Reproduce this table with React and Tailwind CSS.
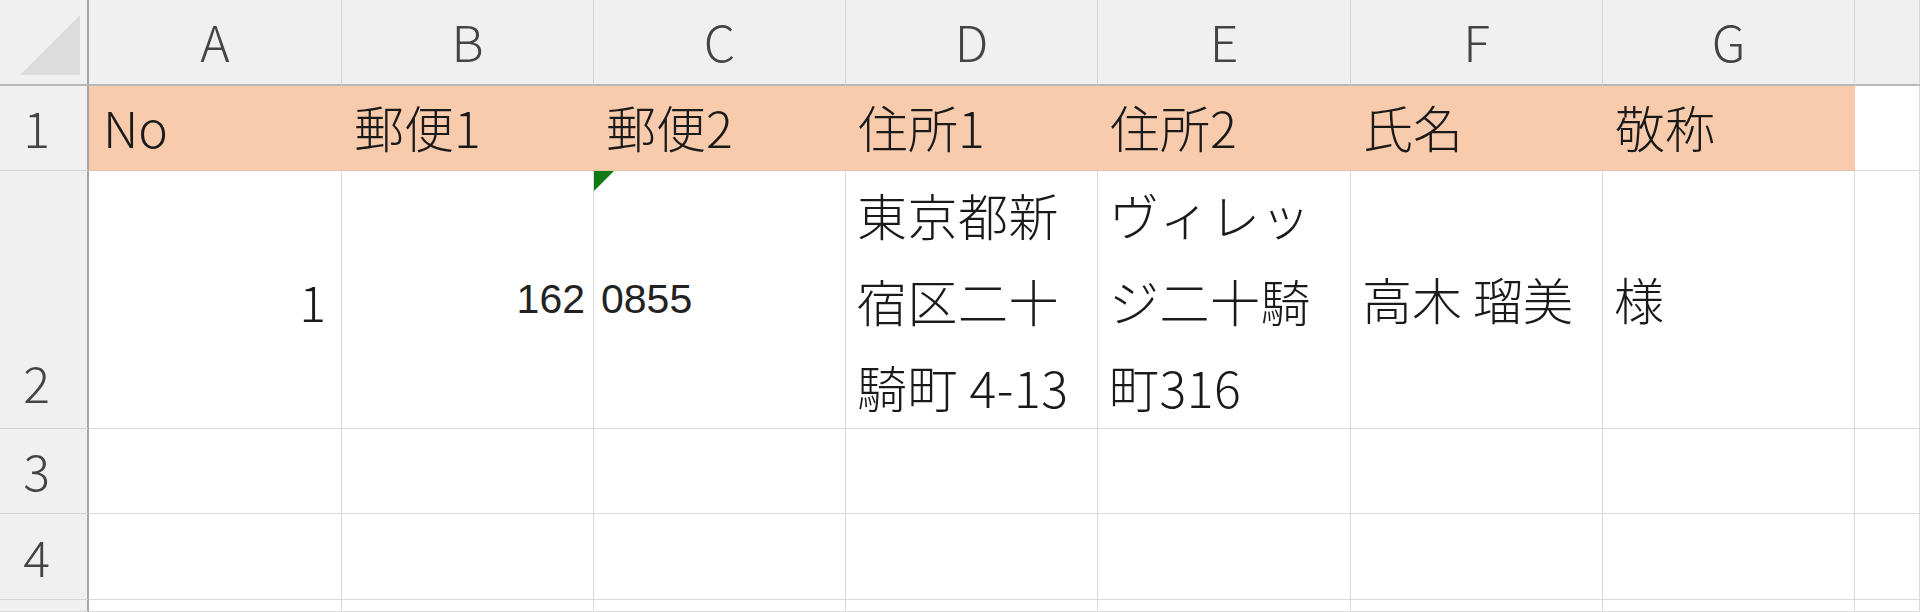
import React from "react";

const jp = { fontFamily: '"Noto Sans CJK JP", "Noto Sans", sans-serif' };
const arial = { fontFamily: '"Liberation Sans", Arial, sans-serif' };

const cols = ["A", "B", "C", "D", "E", "F", "G", ""];
const heads = ["No", "郵便1", "郵便2", "住所1", "住所2", "氏名", "敬称"];

function ColHead({ label }) {
  return (
    <div className="flex items-center justify-center pb-1 bg-[#f0f0f0] border-r border-r-[#d6d6d6] border-b-2 border-b-[#b8b8b8] text-[50px] leading-none text-[#444]">
      {label}
    </div>
  );
}

function RowHead({ n, bottom }) {
  return (
    <div
      className={`flex justify-center pr-[14px] bg-[#f0f0f0] border-r-2 border-r-[#a6a6a6] border-b border-b-[#d6d6d6] text-[50px] leading-none text-[#444] ${
        bottom ? "items-end pb-[22px]" : "items-center pb-1"
      }`}
    >
      {n}
    </div>
  );
}

function Cell({ children, className = "" }) {
  return (
    <div className={`relative border-r border-b border-[#dadada] bg-white text-[#1a1a1a] ${className}`}>
      {children}
    </div>
  );
}

export default function App() {
  return (
    <div style={jp} className="w-[1920px] h-[612px] overflow-hidden bg-white font-light">
      <div className="grid grid-cols-[89px_253px_252px_252px_252px_253px_252px_252px_1fr] grid-rows-[86px_85px_258px_85px_86px_1fr] h-full">
        {/* corner */}
        <div className="relative bg-[#f0f0f0] border-r-2 border-r-[#a6a6a6] border-b-2 border-b-[#b8b8b8]">
          <svg className="absolute left-[20px] top-[15px]" width="60" height="60" viewBox="0 0 60 60">
            <polygon points="0,60 60,60 60,0" fill="#dcdcdc" />
          </svg>
        </div>
        {cols.map((c, i) => (
          <ColHead key={i} label={c} />
        ))}

        {/* row 1 */}
        <RowHead n="1" />
        {heads.map((h, i) => (
          <div
            key={h}
            className={`flex items-center pb-1 bg-[#f8cbad] border-b border-b-[#e9c0a4] text-[50px] leading-none text-[#1a1a1a] ${
              i === 0 ? "pl-[14px]" : "pl-[12px]"
            }`}
          >
            {h}
          </div>
        ))}
        <Cell />

        {/* row 2 */}
        <RowHead n="2" bottom />
        <Cell className="flex items-center justify-end pr-[15px] text-[50px] leading-none">1</Cell>
        <Cell className="flex items-center justify-end pr-[8px]">
          <span style={arial} className="text-[41px] leading-none font-normal text-[#222]">
            162
          </span>
        </Cell>
        <Cell className="flex items-center pl-[7px]">
          <svg className="absolute left-0 top-0" width="20" height="20" viewBox="0 0 20 20">
            <polygon points="0,0 20,0 0,20" fill="#127a12" />
          </svg>
          <span style={arial} className="text-[41px] leading-none font-normal text-[#222]">
            0855
          </span>
        </Cell>
        <Cell className="pl-[11px] text-[50px] leading-[86px] tracking-[0.5px]">
          <div>東京都新</div>
          <div>宿区二十</div>
          <div>騎町 4-13</div>
        </Cell>
        <Cell className="pl-[11px] text-[50px] leading-[86px] tracking-[0.5px]">
          <div>ヴィレッ</div>
          <div>ジ二十騎</div>
          <div>町316</div>
        </Cell>
        <Cell className="flex items-center pl-[11px] pb-1 text-[50px] leading-none">高木 瑠美</Cell>
        <Cell className="flex items-center pl-[11px] pb-1 text-[50px] leading-none">様</Cell>
        <Cell />

        {/* rows 3-5 */}
        {["3", "4", ""].map((n, r) => (
          <React.Fragment key={r}>
            <RowHead n={n} />
            {cols.map((c, i) => (
              <Cell key={i} />
            ))}
          </React.Fragment>
        ))}
      </div>
    </div>
  );
}
